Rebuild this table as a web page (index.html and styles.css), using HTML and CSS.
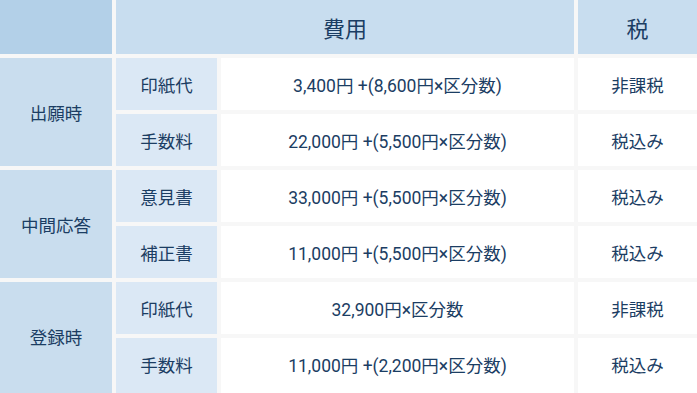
FILE: index.html
```html
<!DOCTYPE html>
<html lang="ja">
<head>
<meta charset="utf-8">
<link rel="stylesheet" href="styles.css">
</head>
<body>
<div class="fee-table">
  <div class="cell corner"></div>
  <div class="cell head span2">費用</div>
  <div class="cell head">税</div>

  <div class="cell group rows2">出願時</div>
  <div class="cell item">印紙代</div>
  <div class="cell value">3,400円 +(8,600円×区分数)</div>
  <div class="cell value">非課税</div>
  <div class="cell item">手数料</div>
  <div class="cell value">22,000円 +(5,500円×区分数)</div>
  <div class="cell value">税込み</div>

  <div class="cell group rows2">中間応答</div>
  <div class="cell item">意見書</div>
  <div class="cell value">33,000円 +(5,500円×区分数)</div>
  <div class="cell value">税込み</div>
  <div class="cell item">補正書</div>
  <div class="cell value">11,000円 +(5,500円×区分数)</div>
  <div class="cell value">税込み</div>

  <div class="cell group rows2 last">登録時</div>
  <div class="cell item">印紙代</div>
  <div class="cell value">32,900円×区分数</div>
  <div class="cell value">非課税</div>
  <div class="cell item last">手数料</div>
  <div class="cell value last">11,000円 +(2,200円×区分数)</div>
  <div class="cell value last">税込み</div>
</div>
</body>
</html>
```
FILE: styles.css
```css
html, body {
  margin: 0;
  padding: 0;
  background: #ffffff;
}
body {
  width: 697px;
  height: 393px;
  overflow: hidden;
}
.fee-table {
  display: grid;
  grid-template-columns: 112px 101px 353px 119px;
  grid-template-rows: 54px repeat(5, 52px) 58px;
  gap: 4px;
  background: #f7f7f7;
  font-family: Roboto, "Noto Sans CJK JP", sans-serif;
  color: #1b3d63;
  font-size: 17.5px;
  width: 697px;
}
.cell {
  display: flex;
  align-items: center;
  justify-content: center;
  white-space: nowrap;
}
.last {
  padding-bottom: 5px;
}
.group.last {
  padding-bottom: 5px;
}
.corner {
  background: #b3d0e8;
}
.head {
  background: #c8ddef;
  font-size: 22px;
}
.span2 {
  grid-column: span 2;
}
.group {
  background: #c9ddee;
  grid-column: 1;
}
.rows2 {
  grid-row: span 2;
}
.item {
  background: #dbe8f5;
}
.value {
  background: #ffffff;
}
```
